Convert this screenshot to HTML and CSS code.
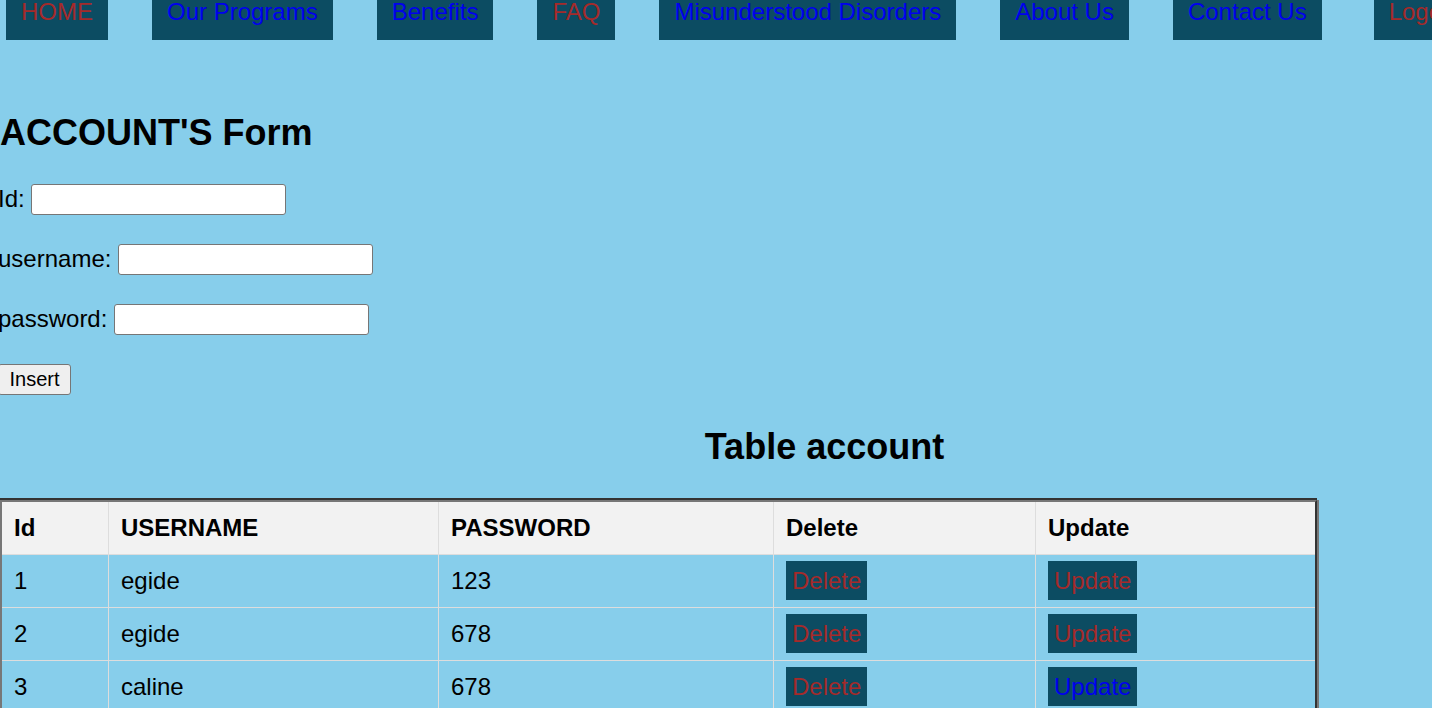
FILE: index.html
```html
<!DOCTYPE html>
<html lang="en">
<head>
<meta charset="utf-8">
<title>Account</title>
<link rel="stylesheet" href="styles.css">
</head>
<body>
<nav class="topnav">
  <a href="#" class="nav-link visited">HOME</a>
  <a href="#" class="nav-link">Our Programs</a>
  <a href="#" class="nav-link">Benefits</a>
  <a href="#" class="nav-link visited">FAQ</a>
  <a href="#" class="nav-link">Misunderstood Disorders</a>
  <a href="#" class="nav-link">About Us</a>
  <a href="#" class="nav-link">Contact Us</a>
  <a href="#" class="nav-link visited logout">Logout</a>
</nav>

<h2 class="form-title">ACCOUNT'S Form</h2>
<form class="account-form">
  <div class="form-row"><label for="id">Id:</label><input id="id" type="text" class="text-input"></div>
  <div class="form-row"><label for="username">username:</label><input id="username" type="text" class="text-input"></div>
  <div class="form-row"><label for="password">password:</label><input id="password" type="password" class="text-input"></div>
  <div class="form-row"><button type="button" class="insert-btn">Insert</button></div>
</form>

<h2 class="table-title">Table account</h2>
<table class="data-table">
  <thead>
    <tr>
      <th class="c-id">Id</th>
      <th class="c-user">USERNAME</th>
      <th class="c-pass">PASSWORD</th>
      <th class="c-del">Delete</th>
      <th class="c-upd">Update</th>
    </tr>
  </thead>
  <tbody>
    <tr>
      <td>1</td><td>egide</td><td>123</td>
      <td><a href="#" class="row-btn visited">Delete</a></td>
      <td><a href="#" class="row-btn visited">Update</a></td>
    </tr>
    <tr>
      <td>2</td><td>egide</td><td>678</td>
      <td><a href="#" class="row-btn visited">Delete</a></td>
      <td><a href="#" class="row-btn visited">Update</a></td>
    </tr>
    <tr>
      <td>3</td><td>caline</td><td>678</td>
      <td><a href="#" class="row-btn visited">Delete</a></td>
      <td><a href="#" class="row-btn">Update</a></td>
    </tr>
  </tbody>
</table>
</body>
</html>
```

FILE: styles.css
```css
html {
  overflow: hidden;
}

body {
  margin: 0;
  background: #87ceeb;
  font-family: "Liberation Sans", Arial, sans-serif;
  font-size: 24px;
  color: #000;
}

/* top navigation */
.topnav {
  display: flex;
  gap: 44px;
  margin-top: -17px;
  padding-left: 6px;
  white-space: nowrap;
}

.nav-link {
  display: block;
  flex: none;
  padding: 15px;
  line-height: 27px;
  background: #0c4c62;
  color: #0000ee;
  text-decoration: none;
}

.nav-link.visited {
  color: #a52a2a;
}

.nav-link.logout {
  margin-left: 8px;
}

/* form */
.form-title {
  margin: 71.5px 0 31px;
  font-size: 36px;
  line-height: 41px;
  font-weight: bold;
}

.account-form {
  display: flex;
  flex-direction: column;
  gap: 28.5px;
  margin-left: -2px;
}

.form-row {
  display: flex;
  align-items: center;
  gap: 6.7px;
  height: 31.5px;
}

.form-row label {
  line-height: 28px;
}

.text-input {
  box-sizing: border-box;
  width: 255px;
  height: 31.5px;
  margin: 0;
  padding: 1px 3px;
  border: 1px solid #767676;
  border-radius: 3px;
  background: #fff;
  font-family: "Liberation Sans", Arial, sans-serif;
  font-size: 20px;
}

.insert-btn {
  box-sizing: border-box;
  height: 31.5px;
  margin: 0;
  padding: 0 10.5px;
  border: 1px solid #767676;
  border-radius: 3px;
  background: #efefef;
  color: #000;
  font-family: "Liberation Sans", Arial, sans-serif;
  font-size: 20px;
  line-height: 28px;
}

/* table */
.table-title {
  margin: 31px 0 33px;
  padding-left: 217px;
  text-align: center;
  font-size: 36px;
  line-height: 41px;
  font-weight: bold;
}

.data-table {
  box-sizing: border-box;
  width: 1317px;
  table-layout: fixed;
  border-collapse: separate;
  border-spacing: 0;
  border: 2px solid #777;
  border-right-color: #333;
  box-shadow: 0 -2px 0 #333, -2px 0 0 #333, 2px 0 0 #777;
}

.data-table th,
.data-table td {
  box-sizing: border-box;
  padding: 12px;
  line-height: 28px;
  text-align: left;
  border-right: 1px solid #dddddd;
  border-bottom: 1px solid #dddddd;
  font-size: 24px;
}

.data-table th:last-child,
.data-table td:last-child {
  border-right: none;
}

.data-table th {
  background: #f2f2f2;
  font-weight: bold;
}

.c-id { width: 107px; }
.c-user { width: 330px; }
.c-pass { width: 335px; }
.c-del { width: 262px; }
.c-upd { width: 279px; }

.row-btn {
  padding: 6px;
  background: #0c4c62;
  color: #0000ee;
  text-decoration: none;
}

.row-btn.visited {
  color: #a52a2a;
}
```
